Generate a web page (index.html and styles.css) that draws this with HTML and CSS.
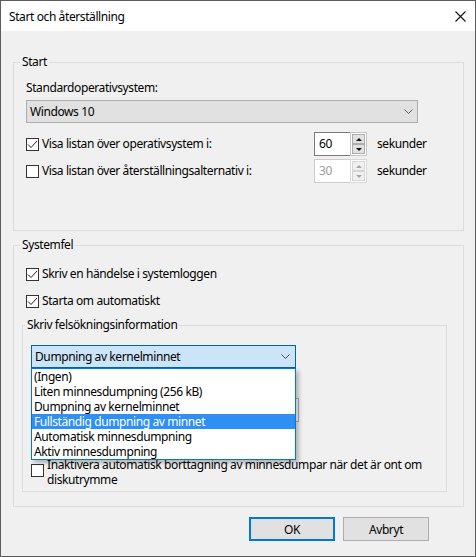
FILE: index.html
```html
<!DOCTYPE html>
<html lang="sv">
<head>
<meta charset="utf-8">
<title>Start och återställning</title>
<link rel="stylesheet" href="styles.css">
</head>
<body>
<div class="window">
  <div class="titlebar">
    <span class="title">Start och återställning</span>
    <svg class="close" width="11" height="11" viewBox="0 0 11 11"><path d="M0.5 0.5 L10.5 10.5 M10.5 0.5 L0.5 10.5" stroke="#111" stroke-width="1.1" fill="none"/></svg>
  </div>
  <div class="content">
    <div class="group start-group">
      <div class="group-title">Start</div>
      <div class="field-label">Standardoperativsystem:</div>
      <div class="select">
        <span>Windows 10</span>
        <svg class="chev" width="9" height="5" viewBox="0 0 9 5"><path d="M0.5 0.5 L4.5 4.5 L8.5 0.5" stroke="#606060" stroke-width="1" fill="none"/></svg>
      </div>
      <div class="timer-rows">
        <div class="timer-row">
          <label class="check">
            <span class="box"><svg width="11" height="11" viewBox="0 0 11 11"><path d="M1 5.5 L4 8.5 L10 2" stroke="#222" stroke-width="1" fill="none"/></svg></span>
            <span>Visa listan över operativsystem i:</span>
          </label>
          <div class="spin">
            <span class="spin-edit">60</span>
            <span class="spin-btns">
              <span class="spin-btn"><span class="tri up"></span></span>
              <span class="spin-btn"><span class="tri down"></span></span>
            </span>
          </div>
          <span class="unit">sekunder</span>
        </div>
        <div class="timer-row">
          <label class="check">
            <span class="box"></span>
            <span>Visa listan över återställningsalternativ i:</span>
          </label>
          <div class="spin disabled">
            <span class="spin-edit">30</span>
            <span class="spin-btns">
              <span class="spin-btn"><span class="tri up"></span></span>
              <span class="spin-btn"><span class="tri down"></span></span>
            </span>
          </div>
          <span class="unit">sekunder</span>
        </div>
      </div>
    </div>

    <div class="group sys-group">
      <div class="group-title">Systemfel</div>
      <label class="check sys-check first">
        <span class="box"><svg width="11" height="11" viewBox="0 0 11 11"><path d="M1 5.5 L4 8.5 L10 2" stroke="#222" stroke-width="1" fill="none"/></svg></span>
        <span>Skriv en händelse i systemloggen</span>
      </label>
      <label class="check sys-check second">
        <span class="box"><svg width="11" height="11" viewBox="0 0 11 11"><path d="M1 5.5 L4 8.5 L10 2" stroke="#222" stroke-width="1" fill="none"/></svg></span>
        <span>Starta om automatiskt</span>
      </label>

      <div class="group inner-group">
        <div class="group-title">Skriv felsökningsinformation</div>
        <div class="combo-wrap">
          <div class="combo">
            <span>Dumpning av kernelminnet</span>
            <svg class="chev" width="9" height="5" viewBox="0 0 9 5"><path d="M0.5 0.5 L4.5 4.5 L8.5 0.5" stroke="#505050" stroke-width="1" fill="none"/></svg>
          </div>
          <ul class="dropdown">
            <li>(Ingen)</li>
            <li>Liten minnesdumpning (256 kB)</li>
            <li>Dumpning av kernelminnet</li>
            <li class="selected">Fullständig dumpning av minnet</li>
            <li>Automatisk minnesdumpning</li>
            <li>Aktiv minnesdumpning</li>
          </ul>
        </div>
        <div class="path-box"></div>
        <label class="check wrap-check">
          <span class="box"></span>
          <span class="wrap-text">Inaktivera automatisk borttagning av minnesdumpar när det är ont om diskutrymme</span>
        </label>
      </div>
    </div>

    <div class="buttons">
      <button class="btn default">OK</button>
      <button class="btn">Avbryt</button>
    </div>
  </div>
</div>
</body>
</html>
```

FILE: styles.css
```css
* { box-sizing: border-box; }

html, body {
  margin: 0;
  padding: 0;
}

body {
  width: 476px;
  height: 557px;
  font-family: "Noto Sans", "Open Sans", "Liberation Sans", sans-serif;
  font-size: 12px;
  letter-spacing: -0.4px;
  color: #000;
  background: #f0f0f0;
}

.window {
  width: 476px;
  height: 557px;
  border: 1px solid #5c5c5c;
  background: #f0f0f0;
  display: flex;
  flex-direction: column;
}

.titlebar {
  height: 30px;
  background: #fff;
  display: flex;
  align-items: center;
  justify-content: space-between;
  padding-left: 8px;
  padding-right: 9px;
  flex: none;
}

.title {
  font-size: 12px;
  line-height: 16px;
  margin-top: 1px;
}

.close {
  display: block;
  margin-top: 1px;
}

.content {
  flex: 1;
  display: flex;
  flex-direction: column;
}

/* group boxes */
.group {
  border: 1px solid #dcdcdc;
  padding-left: 12px;
}

.group-title {
  width: fit-content;
  margin-top: -9px;
  margin-left: -6px;
  padding: 0 2px;
  line-height: 16px;
  background: #f0f0f0;
}

.start-group {
  width: 451px;
  margin-top: 31px;
  margin-left: 12px;
  padding-bottom: 48px;
}

.field-label {
  margin-top: 10px;
  line-height: 16px;
}

.select {
  margin-top: 4px;
  width: 392px;
  height: 23px;
  border: 1px solid #adadad;
  background: #e1e1e1;
  display: flex;
  align-items: center;
  justify-content: space-between;
  padding-left: 3px;
  padding-right: 4px;
}

.chev { display: block; }

.timer-rows {
  margin-top: 9px;
  display: flex;
  flex-direction: column;
  gap: 4px;
}

.timer-row {
  display: grid;
  grid-template-columns: 278px 53px auto;
  column-gap: 10px;
  align-items: center;
  height: 23px;
}

.check {
  display: flex;
  align-items: center;
  gap: 3px;
  line-height: 16px;
}

.box {
  width: 13px;
  height: 13px;
  border: 1px solid #333;
  background: #fff;
  flex: none;
  display: flex;
  align-items: center;
  justify-content: center;
}

.box svg { display: block; }

.spin {
  display: flex;
  height: 24px;
}

.spin-edit {
  width: 36px;
  border: 1px solid #7a7a7a;
  border-right: none;
  background: #fff;
  padding-left: 4px;
  line-height: 22px;
}

.spin-btns {
  width: 17px;
  border: 1px solid #c6c6c6;
  background: #fff;
  display: flex;
  flex-direction: column;
  padding: 1px;
  gap: 0;
}

.spin-btn {
  flex: 1;
  background: #e1e1e1;
  border: 1px solid #adadad;
  display: flex;
  align-items: center;
  justify-content: center;
}

.tri {
  width: 0;
  height: 0;
  border-left: 3px solid transparent;
  border-right: 3px solid transparent;
}

.tri.up { border-bottom: 3px solid #111; }
.tri.down { border-top: 3px solid #111; }

.spin.disabled .spin-edit {
  border-color: #cccccc;
  color: #9a9a9a;
}

.spin.disabled .spin-btns { border-color: #d9d9d9; }

.spin.disabled .spin-btn {
  background: #f0f0f0;
  border-color: #d5d5d5;
}

.spin.disabled .tri.up { border-bottom-color: #a6a6a6; }
.spin.disabled .tri.down { border-top-color: #a6a6a6; }

.unit { line-height: 16px; }

/* Systemfel */
.sys-group {
  width: 451px;
  margin-top: 14px;
  margin-left: 12px;
  padding-bottom: 14px;
}

.sys-check.first { margin-top: 13px; }
.sys-check.second { margin-top: 11px; }

.inner-group {
  width: 425px;
  margin-top: 16px;
  margin-left: -4px;
  padding-left: 8px;
  padding-bottom: 4px;
}

.combo-wrap {
  position: relative;
  margin-top: 12px;
  width: 265px;
}

.combo {
  height: 23px;
  border: 1px solid #0063b1;
  background: #cce4f7;
  display: flex;
  align-items: center;
  justify-content: space-between;
  padding-left: 3px;
  padding-right: 5px;
}

.dropdown {
  position: absolute;
  left: 0;
  top: 23px;
  width: 265px;
  margin: 0;
  padding: 0;
  list-style: none;
  background: #fff;
  border: 1px solid #0078d7;
  box-shadow: 3px 3px 4px rgba(0, 0, 0, 0.25);
  z-index: 2;
}

.dropdown li {
  height: 15px;
  line-height: 15px;
  padding-left: 2px;
  white-space: nowrap;
}

.dropdown li.selected {
  background: #2f8ff2;
  color: #fff;
}

.path-box {
  margin-top: 30px;
  width: 268px;
  height: 24px;
  border: 1px solid #adadad;
  background: #fff;
}

.wrap-check {
  margin-top: 35px;
  align-items: flex-start;
  gap: 3px;
}

.wrap-check .box { margin-top: 7px; }

.wrap-text {
  line-height: 15px;
  width: 380px;
}

/* buttons */
.buttons {
  display: flex;
  justify-content: flex-end;
  gap: 8px;
  margin-top: 10px;
  padding-right: 46px;
}

.btn {
  width: 86px;
  height: 24px;
  font-family: inherit;
  font-size: 12px;
  letter-spacing: -0.4px;
  color: #000;
  background: #e1e1e1;
  border: 1px solid #adadad;
  padding: 0;
  margin: 0;
}

.btn.default {
  border: 2px solid #0078d7;
}
```
